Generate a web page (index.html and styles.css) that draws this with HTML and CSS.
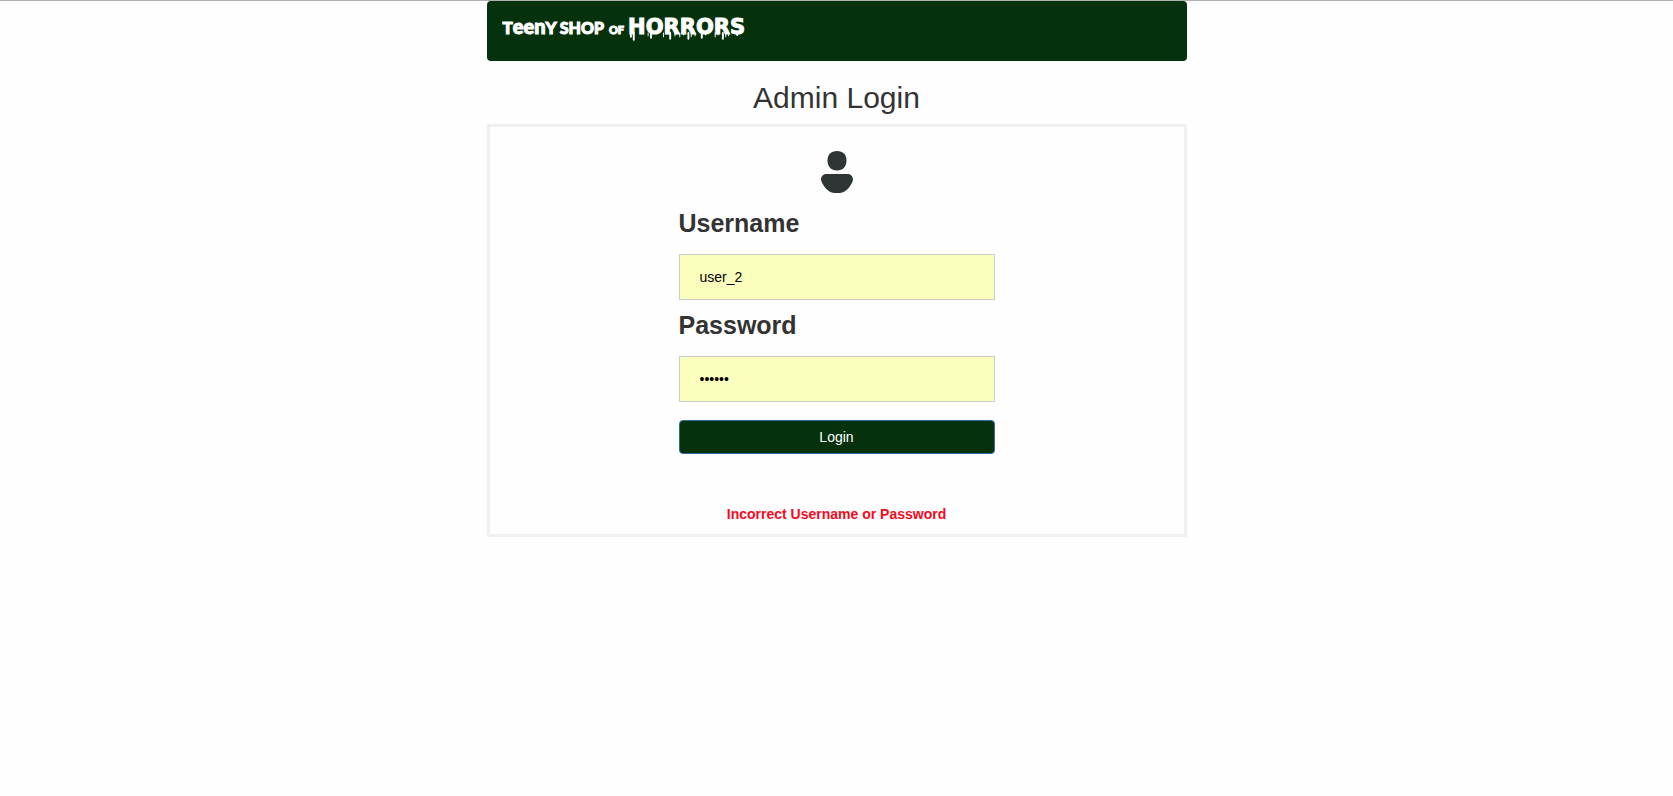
FILE: index.html
```html
<!DOCTYPE html>
<html lang="en">
<head>
<meta charset="utf-8">
<meta name="viewport" content="width=device-width, initial-scale=1">
<title>Admin Login</title>
<link rel="stylesheet" href="styles.css">
</head>
<body>
<div class="container">
  <header class="navbar">
    <a class="brand" href="#">
      <span class="brand-teeny">T<span class="brand-tall">een</span>Y</span>
      <span class="brand-shop">SHOP</span>
      <span class="brand-of">OF</span>
      <span class="brand-horrors">HORRORS
        <svg class="drips" viewBox="0 0 122 9" fill="none" stroke="#fff" stroke-linecap="round" aria-hidden="true">
          <path stroke-width="2" d="M3 0V4M6 0V7M24 0V5M44 0V6M63 0V6M77 0V5M99 0V6M114 0V2"/>
          <path stroke-width="1" d="M21 0V3M37 0V4M40 0V1M49 0V3M54 0V4M58 0V2M66 0V4M70 0V3M81 0V2M91 0V4M94 0V2M102 0V4M105 0V3"/>
        </svg>
      </span>
    </a>
  </header>
  <main>
    <h1 class="title">Admin Login</h1>
    <form class="card" action="#" method="post">
      <svg class="avatar" viewBox="0 0 32 42" fill="#2f3535" aria-hidden="true">
        <path d="M16 0C22 0 25.500 3.500 25.500 9.500S22 19.500 16 19.500 6.500 15.500 6.500 9.500 10 0 16 0Z"/>
        <path d="M5.500 23H26.500C30 23 32 25.500 32 28.500 32 31 28.500 36.500 25.500 39 23 41.500 20 42 16 42S9 41.500 6.500 39C3.500 36.500 0 31 0 28.500 0 25.500 2 23 5.500 23Z"/>
      </svg>
      <div class="fields">
        <label class="label" for="username">Username</label>
        <input class="input" id="username" name="username" type="text" value="user_2">
        <label class="label" for="password">Password</label>
        <input class="input" id="password" name="password" type="password" value="secret">
        <button class="button" type="submit">Login</button>
      </div>
      <p class="error" role="alert">Incorrect Username or Password</p>
    </form>
  </main>
</div>
</body>
</html>
```

FILE: styles.css
```css
* {
  box-sizing: border-box;
}

body {
  margin: 0;
  border-top: 1px solid #b0b0b0;
  background: #fefefe;
  color: #333;
  font: 14px/20px "Liberation Sans", Arial, sans-serif;
}

.container {
  max-width: 700px;
  margin: 0 auto;
}

.navbar {
  display: flex;
  align-items: flex-start;
  min-height: 60px;
  padding: 13px 16px;
  border-radius: 4px;
  background: #05320c;
}

.brand {
  display: inline-flex;
  align-items: baseline;
  color: #fff;
  font-family: Lato, sans-serif;
  font-weight: 900;
  line-height: 24px;
  text-decoration: none;
  -webkit-text-stroke: 1px #fff;
}

.brand-teeny {
  margin-right: 3px;
  font-size: 17px;
}

.brand-tall {
  font-size: 20px;
}

.brand-shop {
  margin-right: 5px;
  font-size: 16px;
}

.brand-of {
  margin-right: 4px;
  font-size: 11px;
}

.brand-horrors {
  position: relative;
  font-family: "DejaVu Sans", sans-serif;
  font-size: 21px;
  font-weight: 700;
}

.drips {
  position: absolute;
  top: 18px;
  left: 0;
  width: 100%;
  overflow: visible;
}

.title {
  margin: 20px 0 10px;
  font-size: 30px;
  font-weight: 400;
  line-height: 33px;
  text-align: center;
}

.card {
  display: flex;
  flex-direction: column;
  align-items: center;
  padding: 24px 16px 10px;
  border: 3px solid #f0f0f0;
}

.avatar {
  width: 32px;
  height: 42px;
}

.fields {
  display: flex;
  flex-direction: column;
  width: 100%;
  max-width: 316px;
  padding-top: 5px;
}

.label {
  margin: 8px 0 13px;
  font-size: 25px;
  font-weight: 700;
  line-height: 35px;
}

.input {
  width: 100%;
  height: 46px;
  padding: 12px 20px;
  border: 1px solid #ccc;
  border-radius: 0;
  background: #faffbd;
  color: #000;
  font: inherit;
}

.button {
  margin-top: 18px;
  padding: 6px 12px;
  border: 1px solid #2e6da4;
  border-radius: 4px;
  background: #05320c;
  color: #fff;
  font: inherit;
}

.error {
  margin: 50px 0 0;
  color: #f8081c;
  font-weight: 700;
}
```
